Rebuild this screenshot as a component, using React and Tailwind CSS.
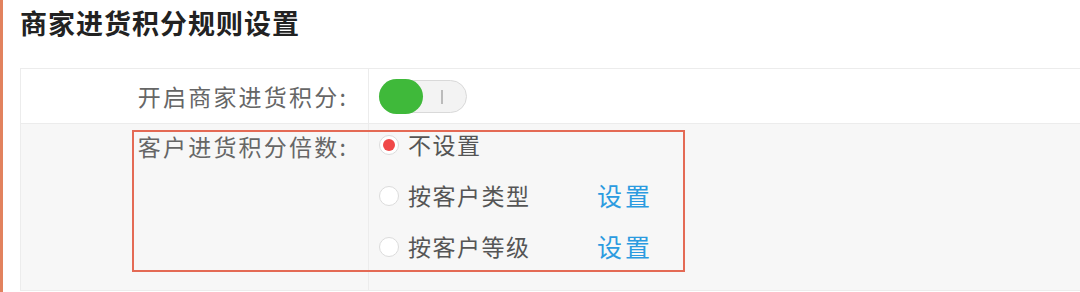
import React from 'react';

const FONT = { fontFamily: '"Microsoft YaHei", "Noto Sans CJK SC", sans-serif' };

function Toggle({ on }) {
  return (
    <div className="relative w-[88px] h-[33px] rounded-full border border-[#d9d9d9] bg-[#f3f3f3]">
      <span className="absolute left-[61px] top-[9px] w-[2px] h-[14px] bg-[#bbb]" />
      {on && <span className="absolute -left-[1px] -top-[2px] w-[44px] h-[35px] rounded-full bg-[#3fb93a]" />}
    </div>
  );
}

function Radio({ checked, label, link }) {
  return (
    <div className="flex items-center h-[51px]">
      <span className="flex items-center justify-center w-[20px] h-[20px] rounded-full border border-[#dcdcdc] bg-white mr-[9px]">
        {checked && <span className="w-[12px] h-[12px] rounded-full bg-[#f04848]" />}
      </span>
      <span className="w-[189px] text-[23px] tracking-[1.5px] text-[#555]">{label}</span>
      {link && <span className="text-[25px] tracking-[3px] text-[#2b9be0]">{link}</span>}
    </div>
  );
}

export default function App() {
  return (
    <div className="w-[1080px] h-[292px] bg-white overflow-hidden border-l-[3px] border-[#e2825e] pl-[17px]" style={FONT}>
      <h1 className="h-[52px] pt-[3px] text-[27px] font-bold text-[#222] tracking-[1px]">
        商家进货积分规则设置
      </h1>
      <div className="mt-[16px] border border-[#ececec] w-[1100px]">
        <div className="flex h-[55px] border-b border-[#ececec] bg-white">
          <div className="w-[348px] border-r border-[#ececec] flex items-center justify-end pr-[20px] text-[23px] tracking-[2.2px] text-[#666]">
            开启商家进货积分:
          </div>
          <div className="flex items-center pl-[10px]">
            <Toggle on />
          </div>
        </div>
        <div className="relative flex h-[166px] bg-[#f7f7f7]">
          <div className="absolute left-[111px] top-[6px] w-[553px] h-[142px] border-2 border-[#e46a55]" />
          <div className="w-[348px] border-r border-[#ececec] flex justify-end pr-[20px] pt-[5px] text-[23px] tracking-[2.2px] text-[#666]">
            客户进货积分倍数:
          </div>
          <div className="pl-[10px] -mt-[5px]">
            <Radio checked label="不设置" />
            <Radio label="按客户类型" link="设置" />
            <Radio label="按客户等级" link="设置" />
          </div>
        </div>
      </div>
    </div>
  );
}
